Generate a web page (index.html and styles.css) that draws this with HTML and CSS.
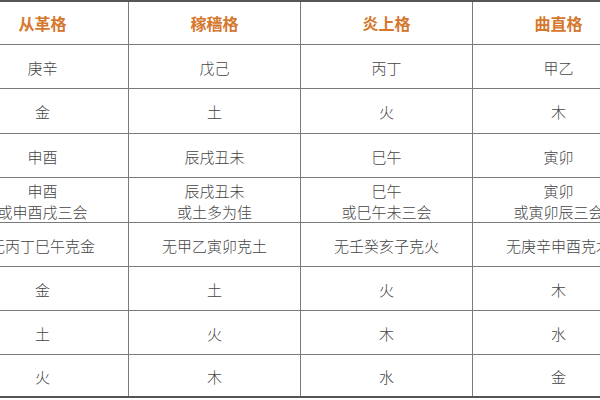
FILE: index.html
```html
<!DOCTYPE html>
<html lang="zh-CN">
<head>
<meta charset="utf-8">
<link rel="stylesheet" href="styles.css">
</head>
<body>
<table class="ge">
  <colgroup><col class="c"><col class="c"><col class="c"><col class="c"></colgroup>
  <thead>
    <tr class="r43"><th>从革格</th><th>稼穑格</th><th>炎上格</th><th>曲直格</th></tr>
  </thead>
  <tbody>
    <tr class="r44"><td>庚辛</td><td>戊己</td><td>丙丁</td><td>甲乙</td></tr>
    <tr class="r45"><td>金</td><td>土</td><td>火</td><td>木</td></tr>
    <tr class="r44"><td>申酉</td><td>辰戌丑未</td><td>巳午</td><td>寅卯</td></tr>
    <tr class="r44"><td>申酉<br>或申酉戌三会</td><td>辰戌丑未<br>或土多为佳</td><td>巳午<br>或巳午未三会</td><td>寅卯<br>或寅卯辰三会</td></tr>
    <tr class="r44"><td>无丙丁巳午克金</td><td>无甲乙寅卯克土</td><td>无壬癸亥子克火</td><td>无庚辛申酉克木</td></tr>
    <tr class="r44"><td>金</td><td>土</td><td>火</td><td>木</td></tr>
    <tr class="r44"><td>土</td><td>火</td><td>木</td><td>水</td></tr>
    <tr class="r43"><td>火</td><td>木</td><td>水</td><td>金</td></tr>
  </tbody>
</table>
</body>
</html>
```
FILE: styles.css
```css
html, body {
  margin: 0;
  padding: 0;
  background: #ffffff;
  overflow: hidden;
  width: 600px;
  height: 400px;
}
.ge {
  border-collapse: collapse;
  table-layout: fixed;
  width: 688px;
  margin-left: -44px;
  font-family: "Noto Sans CJK SC", sans-serif;
}
.c { width: 172px; }
.ge th, .ge td {
  border: 1px solid #7a7a7a;
  padding: 0;
  text-align: center;
  vertical-align: middle;
  box-sizing: border-box;
}
.ge thead th {
  border-top: 2px solid #555555;
  color: #d5782e;
  font-weight: 700;
  font-size: 16px;
}
.ge td {
  color: #444444;
  font-size: 15px;
  font-weight: 300;
  line-height: 21px;
  padding-top: 2px;
}
.ge tbody tr:last-child td {
  border-bottom: 2px solid #555555;
}
.r43 { height: 43px; }
.r44 { height: 44px; }
.r45 { height: 45px; }
```
